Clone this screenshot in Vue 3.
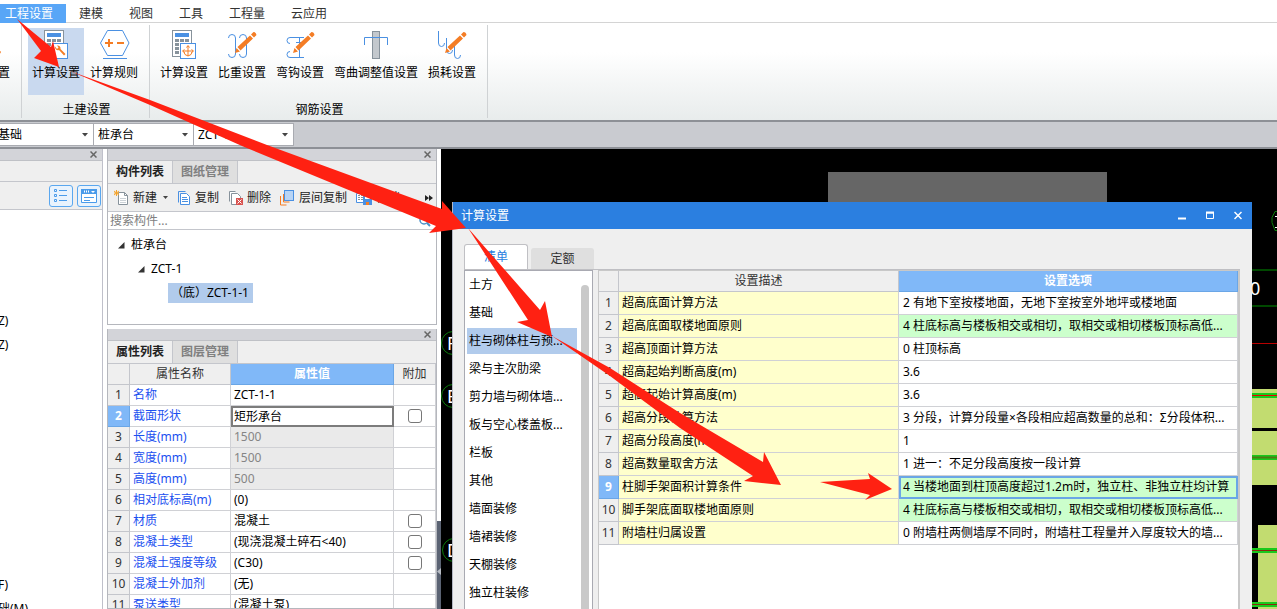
<script setup>
import { ref } from 'vue'

const menus = ['工程设置', '建模', '视图', '工具', '工程量', '云应用']
const groups = [
  { title: '土建设置', items: [{ t: '计算设置', i: 'wrench', on: true }, { t: '计算规则', i: 'hex' }] },
  {
    title: '钢筋设置',
    items: [
      { t: '计算设置', i: 'move' },
      { t: '比重设置', i: 'weight' },
      { t: '弯钩设置', i: 'hook' },
      { t: '弯曲调整值设置', i: 'bend' },
      { t: '损耗设置', i: 'loss' }
    ]
  }
]
const combos = [
  { label: '构件大类', value: '基础' },
  { label: '构件类型', value: '桩承台' },
  { label: '构件名称', value: 'ZCT-1' }
]
const props = [
  { n: '名称', v: 'ZCT-1-1' },
  { n: '截面形状', v: '矩形承台', on: true, check: true },
  { n: '长度(mm)', v: '1500', off: true },
  { n: '宽度(mm)', v: '1500', off: true },
  { n: '高度(mm)', v: '500', off: true },
  { n: '相对底标高(m)', v: '(0)' },
  { n: '材质', v: '混凝土', check: true },
  { n: '混凝土类型', v: '(现浇混凝土碎石<40)', check: true },
  { n: '混凝土强度等级', v: '(C30)', check: true },
  { n: '混凝土外加剂', v: '(无)' },
  { n: '泵送类型', v: '(混凝土泵)' }
]
const cats = ['土方', '基础', '柱与砌体柱与预...', '梁与主次肋梁', '剪力墙与砌体墙...', '板与空心楼盖板...', '栏板', '其他', '墙面装修', '墙裙装修', '天棚装修', '独立柱装修']
const cat = ref(2)
const settings = [
  { n: '超高底面计算方法', v: '2 有地下室按楼地面，无地下室按室外地坪或楼地面' },
  { n: '超高底面取楼地面原则', v: '4 柱底标高与楼板相交或相切，取相交或相切楼板顶标高低...', green: true },
  { n: '超高顶面计算方法', v: '0 柱顶标高' },
  { n: '超高起始判断高度(m)', v: '3.6' },
  { n: '超高起始计算高度(m)', v: '3.6' },
  { n: '超高分段计算方法', v: '3 分段，计算分段量×各段相应超高数量的总和：Σ分段体积...' },
  { n: '超高分段高度(m)', v: '1' },
  { n: '超高数量取舍方法', v: '1 进一：不足分段高度按一段计算' },
  { n: '柱脚手架面积计算条件', v: '4 当楼地面到柱顶高度超过1.2m时，独立柱、非独立柱均计算', green: true, on: true },
  { n: '脚手架底面取楼地面原则', v: '4 柱底标高与楼板相交或相切，取相交或相切楼板顶标高低...', green: true },
  { n: '附墙柱归属设置', v: '0 附墙柱两侧墙厚不同时，附墙柱工程量并入厚度较大的墙...' }
]
</script>

<template>
  <div class="app">
    <nav class="menu">
      <button v-for="(m, k) in menus" :key="m" :class="{ on: k === 0 }">{{ m }}</button>
    </nav>

    <header class="ribbon">
      <section class="group cut">
        <button class="tool">
          <svg width="12" height="32"><path d="M0 18l3 4-3 5z" fill="#f47d25" /></svg>
          <span>置</span>
        </button>
      </section>
      <section v-for="g in groups" :key="g.title" class="group">
        <div class="tools">
          <button v-for="b in g.items" :key="b.t" class="tool" :class="{ on: b.on }">
            <svg width="36" height="32" viewBox="0 0 36 32" fill="none">
              <g v-if="b.i === 'wrench' || b.i === 'move'">
                <rect x="6.5" y=".5" width="19" height="26" fill="#fff" stroke="#87929b" />
                <rect x="9" y="3" width="14" height="4" fill="#4a90e2" />
                <path d="M9 10.5h14M9 14.5h14M9 18.5h14M9 22.5h14" stroke="#87929b" stroke-width="3" stroke-dasharray="4 1" />
                <rect x="14.500" y="13.500" width="15" height="15" fill="#fff" stroke="#4a90e2" />
                <path v-if="b.i === 'wrench'" d="M17 16.500a3 3 0 0 0 4 3.500l5 5.500 1.500-1.500-5-5a3 3 0 0 0-3.500-3.500l1.500 2-1.500 1.500z" fill="#f47d25" />
                <path v-else d="M22 16v10M17 21h10M20.500 17.500l1.500-2 1.500 2M18 22q0 3 4 4 4-1 4-4M18.500 19.500l-2 1.500 2 1.500M25.500 19.500l2 1.500-2 1.500" stroke="#f47d25" />
              </g>
              <g v-else-if="b.i === 'hex'">
                <path d="M4.500 13l7-12.500h15l6.500 12.500-6.500 12.500h-15zM7 28.500h24" stroke="#4a90e2" />
                <path d="M9 13h8M13 9v8M21 13h7" stroke="#f47d25" stroke-width="2" />
              </g>
              <path v-else-if="b.i === 'weight'" d="M4.500 8q0-3.500 3.500-3.500t3.500 3.500v16q0 3.500-3.500 3.500t-3.500-3.500M15.500 8q0-3.500 3.500-3.500t3.500 3.500v16q0 3.500-3.500 3.500t-3.500-3.500" stroke="#4a90e2" />
              <path v-else-if="b.i === 'hook'" d="M22 7.500H8q-3 0-3 3t3 3M8 21.500q-3 0-3 3t3 3h14M17.500 7v21M14 12.500h7" stroke="#4a90e2" />
              <g v-else-if="b.i === 'bend'">
                <rect x="14.500" y="1.500" width="7" height="27" fill="#c3c8cd" stroke="#87929b" />
                <path d="M6.500 15V7.500h23V15" stroke="#4a90e2" />
              </g>
              <path v-else d="M4.500 1v12q0 3.500 3 3.500t3-3.500M12.500 8v12q0 3.500 3 3.500t3-3.500M20.500 13v12q0 3.500 3 3.500t3-3.500" stroke="#4a90e2" />
              <g v-if="['weight', 'hook', 'loss'].includes(b.i)" fill="#f47d25">
                <path d="M11 23l1.500-5 3.500 3.500zM13.500 17L26 5.500l3 3L16.500 20.500zM27 4.500l2.500-2.500q2.500 0 3 3l-2.500 2.500z" />
              </g>
            </svg>
            <span>{{ b.t }}</span>
          </button>
        </div>
        <h2>{{ g.title }}</h2>
      </section>
    </header>

    <div class="combos">
      <label v-for="c in combos" :key="c.label" class="combo">
        <select :aria-label="c.label"><option>{{ c.value }}</option></select>
        <svg width="6" height="4"><path d="M0 0h6L3 3.500z" fill="#444" /></svg>
      </label>
    </div>

    <main class="work">
      <aside class="left">
        <div class="strip"><button class="x" aria-label="关闭"><svg width="7" height="7"><path d="M.5.5l6 6M6.500.5l-6 6" stroke="#666" stroke-width="1.500" /></svg></button></div>
        <div class="blank"></div>
        <div class="views">
          <button aria-label="列表视图">
            <svg width="14" height="14" fill="none" stroke="#4a9bea"><path d="M.5.5h2v2h-2zM.5 5.500h2v2h-2zM.5 10.500h2v2h-2zM5 1.500h8M5 6.500h8M5 11.500h8" /></svg>
          </button>
          <button aria-label="缩略视图">
            <svg width="16" height="14" fill="none" stroke="#4a9bea"><path d="M.5.5h15v13H.5z" fill="#fff" /><path d="M0 2.500h16" stroke-width="5" /><path d="M3 2.500h6" stroke="#fff" stroke-width="2" stroke-dasharray="1 1" /><path d="M10 2h4l-2 2z" fill="#fff" stroke="none" /><path d="M3 8.500h10M3 11.500h6" /></svg>
          </button>
        </div>
        <div class="nav"><p>Z)</p><p>Z)</p><p class="far">F)</p><p>础(M)</p></div>
      </aside>

      <div class="mid">
        <section class="panel">
          <div class="strip"><button class="x" aria-label="关闭"><svg width="7" height="7"><path d="M.5.5l6 6M6.500.5l-6 6" stroke="#666" stroke-width="1.500" /></svg></button></div>
          <div class="tabs"><button class="on">构件列表</button><button>图纸管理</button></div>
          <div class="bar">
            <button>
              <svg width="15" height="16" fill="none"><path d="M4.500 2.500h6l3 3v9h-9z" fill="#fff" stroke="#87929b" /><path d="M10.500 2.500v3h3" stroke="#87929b" /><path d="M6 8.500h6M6 10.500h6M6 12.500h6" stroke="#ccd2d7" /><path d="M0 1l5 4M5 1L0 5M2.500 0v6M0 3h5" stroke="#f5a32a" /></svg>新建
              <svg class="dd" width="5" height="3"><path d="M0 0h5L2.500 3z" fill="#444" /></svg>
            </button>
            <button><svg width="14" height="16" fill="none" stroke="#4a90e2"><path d="M1.500 12.500v-11h7" /><path d="M3.500 3.500h6l3 3v8h-9z" fill="#fff" /><path d="M5 7.500h5M5 9.500h6M5 11.500h6" /></svg>复制</button>
            <button><svg width="15" height="16" fill="none" stroke="#87929b"><path d="M1.500 11.500v-10h6M3.500 3.500h6l3 3v8h-9z" fill="#fff" /><rect x="8" y="8" width="7" height="7" fill="#d9534f" stroke="none" /><path d="M9.500 9.500l4 4M13.500 9.500l-4 4" stroke="#fff" /></svg>删除</button>
            <button><svg width="15" height="16" fill="none"><path d="M.5 6v9h6M3.500 4v8h6" stroke="#f47d25" /><rect x="4.500" y=".5" width="9" height="10" fill="#b8d4f5" stroke="#4a90e2" /></svg>层间复制</button>
            <button class="last"><svg width="16" height="16" fill="none"><path d="M.5 3.500h9v9h-9z" stroke="#4a90e2" fill="#fff" /><path d="M2 5.500h6M2 7.500h6M2 9.500h6" stroke="#87929b" stroke-dasharray="2 1" /><path d="M7 6h9v9H7z" fill="#4a90e2" /><path d="M9 6h5v3H9z" fill="#fff" /><path d="M10 12h3v3h-3z" fill="#f47d25" /></svg>存档</button>
            <button class="more" aria-label="更多"><svg width="8" height="6" fill="#222"><path d="M0 0l4 3-4 3zM4 0l4 3-4 3z" /></svg></button>
          </div>
          <label class="search">
            <input type="text" aria-label="搜索构件" placeholder="搜索构件..." />
            <svg width="12" height="12" fill="none" stroke="#4a90c8" stroke-width="1.500"><circle cx="5" cy="5" r="4" /><path d="M8 8l3 3" stroke-width="2" /></svg>
          </label>
          <ul class="tree">
            <li><svg width="7" height="7"><path d="M0 6.500L6.500 0v6.500z" fill="#333" /></svg>桩承台</li>
            <li class="l2"><svg width="7" height="7"><path d="M0 6.500L6.500 0v6.500z" fill="#333" /></svg>ZCT-1</li>
            <li class="l3"><span>（底）ZCT-1-1</span></li>
          </ul>
        </section>

        <section class="panel grow">
          <div class="strip"><button class="x" aria-label="关闭"><svg width="7" height="7"><path d="M.5.5l6 6M6.500.5l-6 6" stroke="#666" stroke-width="1.500" /></svg></button></div>
          <div class="tabs"><button class="on">属性列表</button><button>图层管理</button></div>
          <table class="props">
            <colgroup><col class="c1" /><col class="c2" /><col /><col class="c4" /></colgroup>
            <thead><tr><th></th><th>属性名称</th><th class="blue">属性值</th><th>附加</th></tr></thead>
            <tbody>
              <tr v-for="(p, k) in props" :key="p.n" :class="{ on: p.on, off: p.off }">
                <th>{{ k + 1 }}</th>
                <td class="name">{{ p.n }}</td>
                <td class="val">{{ p.v }}</td>
                <td class="chk"><input v-if="p.check" type="checkbox" :aria-label="p.n + '附加'" /></td>
              </tr>
            </tbody>
          </table>
        </section>
      </div>

      <div class="splitter"><svg width="4" height="7"><path d="M4 0v7L0 3.500z" fill="#b8bcc4" /></svg></div>

      <div class="canvas">
        <svg class="draw left-draw" width="700" height="460" fill="none">
          <rect x="387" y="23" width="279" height="40" fill="#666" />
          <g stroke="#0a7d0a"><circle cx="12" cy="194" r="11.500" /><circle cx="12" cy="247" r="11.500" /><circle cx="13" cy="401" r="11.500" /></g>
          <g fill="#fff" font-size="18"><text x="6" y="201">F</text><text x="6" y="254">E</text><text x="6" y="408">D</text></g>
        </svg>
        <svg class="draw right-draw" width="26" height="460" fill="none">
          <path d="M0 121h26M0 157h26" stroke="#004800" stroke-width="2" />
          <path d="M0 194.500h26" stroke="#b80000" />
          <path d="M26 62.500h-2l-3 6v5l3 8h2" stroke="#0a7d0a" />
          <path d="M24 67.500h2M24 78.500h2" stroke="#fff" />
          <text x="-1" y="146" fill="#fff" font-size="18">0</text>
          <path d="M0 240h26v39H0zM0 282h26v54H0zM7 376h19v84H7z" fill="#c2dc70" />
          <path d="M0 246.500h26M0 308.500h26M0 401.500h26M0 455.500h26" stroke="#19c81c" stroke-width="5" />
          <path d="M0 246.500h26" stroke="#f00000" />
          <path d="M0 308.500h26" stroke="#4f7a12" stroke-width="2" />
          <path d="M0 401.500h26M0 455.500h26" stroke="#8a2a10" />
        </svg>

        <section class="dialog" role="dialog" aria-label="计算设置">
          <div class="title">
            <h1>计算设置</h1>
            <button aria-label="最小化"><svg width="8" height="9"><path d="M0 7.500h8" stroke="#fff" stroke-width="2" /></svg></button>
            <button aria-label="最大化"><svg width="8" height="9" fill="none"><path d="M.5 1v6.500h7V1M0 2h8" stroke="#fff" /><path d="M0 1.500h8" stroke="#fff" stroke-width="2" /></svg></button>
            <button aria-label="关闭"><svg width="8" height="9"><path d="M.5 1l7 7M7.500 1l-7 7" stroke="#fff" stroke-width="1.500" /></svg></button>
          </div>
          <div class="dtabs"><button class="on">清单</button><button>定额</button></div>
          <div class="dbody">
            <div class="cats">
              <div class="catlist">
                <button v-for="(c, k) in cats" :key="c" :class="{ on: cat === k }" @click="cat = k">{{ c }}</button>
              </div>
              <div class="thumb"></div>
            </div>
            <div class="grid">
              <table class="sets">
                <colgroup><col class="s1" /><col class="s2" /><col /></colgroup>
                <thead><tr><th></th><th>设置描述</th><th class="blue">设置选项</th></tr></thead>
                <tbody>
                  <tr v-for="(s, k) in settings" :key="s.n" :class="{ on: s.on, green: s.green }">
                    <th>{{ k + 1 }}</th>
                    <td class="desc">{{ s.n }}</td>
                    <td class="opt">{{ s.v }}</td>
                  </tr>
                </tbody>
              </table>
            </div>
          </div>
        </section>
      </div>
    </main>

    <svg class="marks" width="1277" height="609" fill="#ff2112">
      <path d="M17 19L51 47 53 41 59 67 34 58 41 51z" />
      <path d="M70 71L150 100 267 145 442 209V201L466 228 429 233 436 226 242 146 150 105z" />
      <path d="M468 228L540 310 545 301 552 337 517 322 528 320z" />
      <path d="M552 336L610 368 680 413 763 462 764 452 781 485 744 481 753 476 680 428 610 376z" />
      <path d="M820 482L870 479 868 473 892 489 865 500 870 495z" />
    </svg>
  </div>
</template>

<style>
body { background: #fff; }
</style>

<style scoped>
.app {
  position: relative;
  display: flex;
  flex-direction: column;
  height: 100vh;
  overflow: hidden;
  background: #fff;
  color: #000;
  font: 12px/16px "Noto Sans", "Noto Sans CJK SC", sans-serif;
}
*, *::before { box-sizing: border-box; }
button, input, select { font: inherit; color: inherit; margin: 0; padding: 0; border: 0; background: none; border-radius: 0; }
h1, h2, p, ul { margin: 0; padding: 0; font: inherit; list-style: none; }
svg { display: block; flex: none; }

.menu { display: flex; flex: none; height: 23px; padding-top: 4px; border-bottom: 1px solid #d4d4d4; }
.menu button { padding: 0 13px; height: 19px; color: #333; white-space: nowrap; }
.menu .on { padding-left: 5px; background: #58a6f7; color: #fff; }

.ribbon { display: flex; flex: none; height: 99px; padding: 2px 0; background: linear-gradient(#fff 30%, #e8ecec); border-bottom: 2px solid #8d9096; }
.group { display: flex; flex-direction: column; border-right: 1px solid #cfd2d4; padding: 3px 7px 0 6px; }
.group.cut { width: 22px; padding: 3px 11px 0 0; align-items: flex-end; }
.group h2 { text-align: center; margin-top: 7px; padding-left: 3px; }
.tools { display: flex; gap: 2px; }
.tool { display: flex; flex-direction: column; align-items: center; gap: 3px; height: 67px; padding: 2px 4px 0; white-space: nowrap; }
.cut .tool { padding: 2px 0 0; }
.tool.on { background: #c9d9ef; }

.combos { display: flex; flex: none; height: 27px; padding-top: 1px; background: #c9cbd0; border-bottom: 2px solid #8d9096; }
.combo { display: grid; width: 100px; height: 23px; border: 1px solid #a9abb1; border-left-width: 0; background: #fff; align-items: center; }
.combo:first-child { margin-left: -6px; }
.combo select { grid-area: 1 / 1; appearance: none; width: 100%; height: 21px; padding-left: 4px; outline: 0; }
.combo svg { grid-area: 1 / 1; justify-self: end; margin-right: 5px; pointer-events: none; }

.work { display: flex; flex: 1; min-height: 0; }
.strip { display: flex; flex: none; justify-content: flex-end; align-items: center; height: 12px; padding-right: 5px; background: #d3d4d9; border-bottom: 1px solid #bfc1c6; }
.left { flex: none; width: 103px; margin-right: 4px; border-right: 1px solid #bfc0ca; overflow: hidden; display: flex; flex-direction: column; }
.blank { flex: none; height: 21px; background: #efefef; border-bottom: 1px solid #c4c6cc; }
.views { display: flex; flex: none; justify-content: flex-end; gap: 4px; height: 28px; padding: 3px 1px 0 0; background: #efefef; border-bottom: 1px solid #c4c6cc; }
.views button { display: grid; place-items: center; width: 24px; height: 22px; border: 1px solid #5aa7ef; border-radius: 3px; background: #e9f3fd; }
.nav { padding-top: 99px; margin-left: -2px; }
.nav p { line-height: 24px; }
.nav .far { margin-top: 216px; }

.mid { display: flex; flex: none; flex-direction: column; gap: 4px; width: 330px; }
.panel { border: 1px solid #b5b7bd; border-top: 0; background: #fff; }
.grow { flex: 1; min-height: 0; overflow: hidden; }
.tabs { display: flex; height: 23px; background: #efefef; border-bottom: 1px solid #c4c6cc; }
.tabs button { width: 65px; height: 22px; background: #dfdfdf; border-right: 1px solid #c4c6cc; color: #808080; font-weight: 700; }
.tabs .on { background: #efefef; color: #222; }
.bar { display: flex; height: 28px; padding: 0 3px 0 6px; gap: 9px; background: #efefef; border-bottom: 1px solid #c4c6cc; overflow: hidden; }
.bar button { display: flex; flex: none; align-items: center; gap: 4px; white-space: nowrap; color: #222; }
.bar .dd { margin-left: 2px; }
.bar .last { margin-right: -9px; }
.bar .more { margin-left: auto; }
.search { display: flex; align-items: center; height: 18px; padding: 0 5px 0 2px; border-bottom: 1px solid #c4c6cc; }
.search input { flex: 1; min-width: 0; height: 16px; outline: 0; }
.search input::placeholder { color: #808080; opacity: 1; }
.tree { height: 94px; padding-top: 3px; }
.tree li { display: flex; align-items: center; gap: 6px; height: 24px; padding-left: 10px; }
.tree .l2 { padding-left: 30px; }
.tree .l3 { padding-left: 60px; }
.tree span { background: #b1cbec; line-height: 20px; padding: 0 4px 0 3px; }

table { width: 100%; table-layout: fixed; border-collapse: separate; border-spacing: 0; }
th, td { padding: 0; font-weight: 400; white-space: nowrap; overflow: hidden; border-right: 1px solid #d0d1d5; border-bottom: 1px solid #d0d1d5; }
th { background: #efefef; color: #333; border-color: #c4c6cc; text-align: center; }
th.blue, .on th { background: #80b8f8; border-color: #6aa6e6; color: #fff; font-weight: 700; }
.c1 { width: 22px; }
.c2 { width: 101px; }
.c4 { width: 42px; }
.props th, .props td { height: 21px; line-height: 20px; }
.name { padding-left: 3px; color: #1b50f0; }
.val { padding-left: 3px; }
.off .val { background: #eaeaea; color: #858585; }
.on .val { border: 1px solid #7c7c7c; padding-left: 2px; outline: 1px solid #7c7c7c; outline-offset: -2px; line-height: 18px; }
.chk { text-align: center; }
.chk input { display: block; appearance: none; width: 14px; height: 14px; margin: 0 auto; border: 1px solid #777; border-radius: 3px; background: #fff; }

.splitter { display: flex; flex: none; flex-direction: column; width: 4px; background: linear-gradient(#fff 372px, #5b6373 372px); padding-top: 419px; }
.canvas { position: relative; flex: 1; min-width: 0; background: #000; overflow: hidden; }
.draw { position: absolute; top: 0; }
.left-draw { left: 0; }
.right-draw { right: 0; }

.dialog { position: absolute; left: 11px; right: 25px; top: 53px; bottom: 0; display: flex; flex-direction: column; background: #efefef; border-left: 1px solid #b4b8c4; }
.title { display: flex; flex: none; align-items: center; height: 27px; padding: 0 10px 0 8px; background: #2b7fe0; color: #fff; gap: 20px; }
.title h1 { flex: 1; }
.dtabs { display: flex; flex: none; align-items: flex-end; gap: 3px; height: 40px; padding-left: 11px; }
.dtabs button { width: 63px; height: 21px; border-radius: 3px 3px 0 0; background: #dfdfdf; color: #333; }
.dtabs .on { width: 64px; height: 25px; border: 1px solid #c0c0c4; border-bottom: 0; background: #fff; color: #2b7fe0; }
.dbody { display: flex; flex: 1; min-height: 0; margin: 0 12px 0 11px; gap: 5px; border-top: 1px solid #bfbfc3; }
.cats { display: flex; flex: none; justify-content: space-between; width: 129px; padding: 1px 3px 0 2px; background: #fff; border: 1px solid #a9aab2; border-width: 1px 1px 0; overflow: hidden; }
.catlist { display: flex; flex-direction: column; gap: 2px; width: 110px; }
.catlist button { flex: none; height: 26px; padding-left: 2px; text-align: left; white-space: nowrap; }
.catlist .on { background: #b1cbec; }
.thumb { width: 8px; margin-top: 13px; border-radius: 4px 4px 0 0; background: #c9c9c9; }
.grid { flex: 1; min-width: 0; background: #fff; border: solid #c8c8c8; border-width: 1px 2px 0 1px; overflow: hidden; }
.s1 { width: 20px; }
.s2 { width: 280px; }
.sets tbody th, .sets td { height: 23px; line-height: 22px; }
.sets thead th { height: 21px; line-height: 20px; }
.desc { padding-left: 3px; background: #ffffcc; }
.opt { padding-left: 4px; }
.green .opt { background: #ccffcc; }
.on .opt { outline: 2px solid #6aa6e6; outline-offset: -2px; }

.marks { position: absolute; left: 0; top: 0; pointer-events: none; }
</style>
